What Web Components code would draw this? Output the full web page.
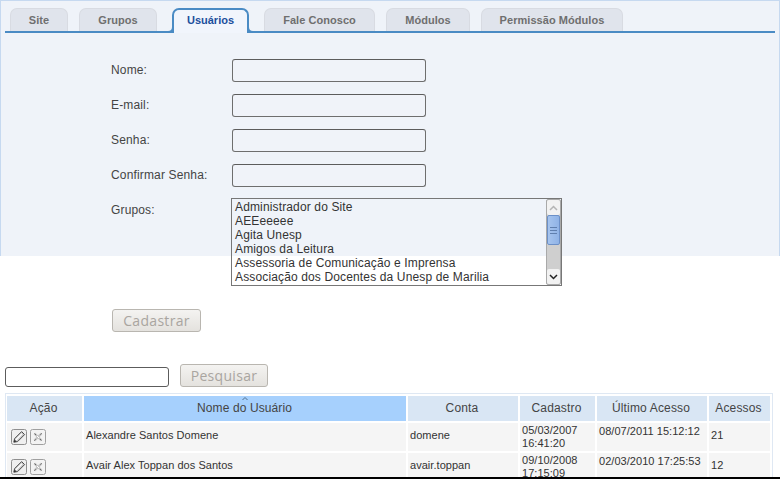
<!DOCTYPE html>
<html lang="pt"><head><meta charset="utf-8"><title>Usuários</title>
<style>
html,body{margin:0;padding:0;background:#fff;font-family:"Liberation Sans",Arial,sans-serif;}
body{width:780px;height:479px;overflow:hidden;}
</style></head><body>
<admin-page>
  <admin-panel>
    <tab-bar>
      <tab-item>Site</tab-item>
      <tab-item style="--gap:11px;--w:78px">Grupos</tab-item>
      <tab-item active style="--gap:15px;--w:77px">Usuários</tab-item>
      <tab-item style="--gap:15px;--w:111px">Fale Conosco</tab-item>
      <tab-item style="--gap:11px;--w:84px">Módulos</tab-item>
      <tab-item style="--gap:11px;--w:142px">Permissão Módulos</tab-item>
    </tab-bar>
    <form-field label="Nome:"><text-box></text-box></form-field>
    <form-field label="E-mail:"><text-box></text-box></form-field>
    <form-field label="Senha:"><text-box></text-box></form-field>
    <form-field label="Confirmar Senha:"><text-box></text-box></form-field>
    <form-field label="Grupos:" style="--top:-1px;--lbl:5px;--bx:-1px">
      <list-box>
        <div>Administrador do Site</div><div>AEEeeeee</div><div>Agita Unesp</div><div>Amigos da Leitura</div><div>Assessoria de Comunicação e Imprensa</div><div>Associação dos Docentes da Unesp de Marilia</div>
      </list-box>
    </form-field>
    <div style="padding:11px 0 0 108px"><push-button style="--w:89px">Cadastrar</push-button></div>
  </admin-panel>
  <search-row>
    <text-box style="--w:164px;--h:20px;--bg:#fff;--bd:#5c5c5c"></text-box>
    <push-button style="--w:88px">Pesquisar</push-button>
  </search-row>
  <user-table></user-table>
</admin-page>
<template id="row-actions">
  <svg width="16" height="16" viewBox="0 0 16 16"><rect x=".5" y=".5" width="15" height="15" rx="2" fill="#efefef" stroke="#8f8f8f"/><path d="M2.800 13.200l.8-3.600 7-7 3 3-7 7z" fill="#c9c9c9" stroke="#4c4c4c"/><path d="M4.800 11l6.200-6.200" stroke="#fff" stroke-width="1.500"/><path d="M2.800 13.200l.7-2.700 2 2z" fill="#333"/></svg>
  <svg width="16" height="16" viewBox="0 0 16 16"><rect x=".5" y=".5" width="15" height="15" rx="2" fill="#f3f3f3" stroke="#a0a0a0"/><path d="M4.500 4.500l7 7M11.500 4.500l-7 7" stroke="#c2c2c2" stroke-width="2.400"/><path d="M4 12l2-2M10 6l2-2" stroke="#8a8a8a" stroke-width="1"/><path d="M4.500 4.500l1.500 1.500M10 10l1.500 1.500" stroke="#6a6a6a" stroke-width="1"/><path d="M7 7l2 2" stroke="#fff"/></svg>
</template>
<script>
const shadow=(el,html)=>{el.attachShadow({mode:'open'}).innerHTML=html;};
customElements.define('admin-page',class extends HTMLElement{connectedCallback(){if(this.shadowRoot)return;shadow(this,`<style>
:host{display:block;position:relative;width:780px;height:479px;overflow:hidden}
.bar{position:absolute;left:0;right:0;bottom:0;height:2px;background:#000}
</style><slot></slot><div class="bar"></div>`);}});
customElements.define('admin-panel',class extends HTMLElement{connectedCallback(){if(this.shadowRoot)return;shadow(this,`<style>
:host{display:block;box-sizing:border-box;height:256px;background:#eff3f9;border:1px solid #c6d9f0;border-bottom:0;padding:7px 3px 0 3px}
</style><slot></slot>`);}});
customElements.define('tab-bar',class extends HTMLElement{connectedCallback(){if(this.shadowRoot)return;shadow(this,`<style>
:host{display:flex;align-items:flex-end;height:25px;box-sizing:border-box;border-bottom:2px solid #4a8bc4;margin:0 1px 26px 1px;padding-left:5px}
</style><slot></slot>`);}});
customElements.define('tab-item',class extends HTMLElement{connectedCallback(){if(this.shadowRoot)return;const a=this.hasAttribute('active');shadow(this,`<style>
:host{display:flex;box-sizing:border-box;position:relative;margin-left:var(--gap,0);width:var(--w,58px);height:23px;margin-bottom:0;align-items:center;justify-content:center;
 font:bold 11px "Liberation Sans",sans-serif;letter-spacing:.05px;color:#6f6f6f;background:#e0e4ec;border:1px solid #d8dbe2;border-bottom:0;border-radius:7px 7px 0 0;padding-bottom:1px}
:host([active]){height:25px;margin-bottom:-2px;color:#1c4f9c;background:#f1f5fc;border:2px solid #4a8bc4;border-bottom:0;letter-spacing:0;padding-bottom:3px}
.c{position:absolute;bottom:0;border-bottom:2px solid #4a8bc4;background:transparent;box-sizing:border-box;width:7px;height:7px}
.l{left:-7px;border-right:2px solid #4a8bc4;border-radius:0 0 6px 0}
.r{right:-7px;border-left:2px solid #4a8bc4;border-radius:0 0 0 6px}
</style><slot></slot>${a?'<i class="c l"></i><i class="c r"></i>':''}`);}});
customElements.define('form-field',class extends HTMLElement{connectedCallback(){if(this.shadowRoot)return;shadow(this,`<style>
:host{display:flex;align-items:flex-start;margin:var(--top,0) 0 12px 0;padding-left:107px;font:12px "Liberation Sans",sans-serif;color:#444}
.l{width:121px;flex:none;padding-top:var(--lbl,4px);margin-right:var(--bx,0);letter-spacing:.15px}
</style><div class="l">${this.getAttribute('label')}</div><slot></slot>`);}});
customElements.define('text-box',class extends HTMLElement{connectedCallback(){if(this.shadowRoot)return;shadow(this,`<style>
:host{display:block}
input{display:block;box-sizing:border-box;width:var(--w,194px);height:var(--h,23px);margin:0;padding:1px 3px;background:var(--bg,#f0f3f9);border:1px solid var(--bd,#6e6e6e);border-top-color:#5c5c5c;border-radius:3px;outline:0}
</style><input type="text">`);}});
customElements.define('list-box',class extends HTMLElement{connectedCallback(){if(this.shadowRoot)return;shadow(this,`<style>
:host{display:flex;box-sizing:border-box;width:331px;height:88px;border:1px solid #777;font:12px/14px "Liberation Sans",sans-serif;color:#333;letter-spacing:.14px}
.o{flex:1;padding:1px 0 0 3px;overflow:hidden}
.s{width:15px;flex:none;display:flex;flex-direction:column;box-sizing:border-box;border:1px solid #a9a9a9;border-radius:2px;background:#cfcfcf}
.u,.d{height:15px;flex:none;display:flex;align-items:center;justify-content:center;background:#f2f2f2;border-radius:2px}
.t{height:30px;flex:none;box-sizing:border-box;background:linear-gradient(90deg,#a6c4ee,#90b3e6);border:1px solid #6c90c8;border-radius:2px;display:flex;align-items:center;justify-content:center}
.f{flex:1}
</style><div class="o"><slot></slot></div><div class="s">
<div class="u"><svg width="9" height="6" viewBox="0 0 9 6"><path d="M1 5l3.500-3.500L8 5" fill="none" stroke="#b5b5b5" stroke-width="1.500"/></svg></div>
<div class="t"><svg width="7" height="7" viewBox="0 0 7 7"><path d="M0 .5h7M0 3.500h7M0 6.500h7" stroke="#5f7fae"/></svg></div><div class="f"></div>
<div class="d"><svg width="9" height="6" viewBox="0 0 9 6"><path d="M1 1l3.500 3.500L8 1" fill="none" stroke="#222" stroke-width="1.500"/></svg></div></div>`);}});
customElements.define('push-button',class extends HTMLElement{connectedCallback(){if(this.shadowRoot)return;shadow(this,`<style>
:host{display:inline-flex;box-sizing:border-box;width:var(--w);height:23px;align-items:center;justify-content:center;border:1px solid #b9b6b0;border-radius:3px;background:linear-gradient(#f4f3f1,#e4e2de);color:#a9a5a0;font:14px "Open Sans","DejaVu Sans",sans-serif;letter-spacing:.3px}
</style><slot></slot>`);}});
customElements.define('search-row',class extends HTMLElement{connectedCallback(){if(this.shadowRoot)return;shadow(this,`<style>
:host{display:flex;align-items:flex-end;gap:11px;margin:108px 0 6px 5px}
</style><slot></slot>`);}});
customElements.define('user-table',class extends HTMLElement{connectedCallback(){if(this.shadowRoot)return;
const rows=[['Alexandre Santos Domene','domene','05/03/2007<br>16:41:20','08/07/2011 15:12:12','21'],['Avair Alex Toppan dos Santos','avair.toppan','09/10/2008<br>17:15:09','02/03/2010 17:25:53','12']];
const icons=document.getElementById('row-actions').innerHTML.trim();
shadow(this,`<style>
:host{display:block;box-sizing:border-box;margin-left:5px;width:768px;border:1px solid #dfe8f3;border-bottom:0;padding:2px 1px 0}
table{border-collapse:separate;border-spacing:2px;table-layout:fixed;width:767px;margin:-2px -2px 0;font:11px "Liberation Sans",sans-serif;color:#333}
th{height:25px;padding:0 2px 2px 0;box-sizing:border-box;background:#d9e6f4;font:12px "Liberation Sans",sans-serif;color:#444;letter-spacing:.17px}
th.on{background:#a6d0fd;position:relative;letter-spacing:.1px;padding-right:1px}
.arr{position:absolute;left:158px;top:1px;width:6px;height:3px}
td{height:28px;padding:0 2px 5px;background:#f5f5f5;letter-spacing:.04px;box-sizing:border-box;overflow:hidden;vertical-align:middle}
td.i{padding:6px 0 0 4px;white-space:nowrap;vertical-align:top;font-size:11px}td.i svg{vertical-align:top}
td.top{vertical-align:top;padding-top:2px;padding-bottom:0;line-height:13px}
td.dt{vertical-align:top;line-height:13px;padding-top:1px;padding-bottom:0}
</style><table><colgroup><col style="width:75px"><col style="width:322px"><col style="width:110px"><col style="width:75px"><col style="width:110px"><col style="width:61px"></colgroup>
<thead><tr><th>Ação</th><th class="on">Nome do Usuário<svg class="arr" viewBox="0 0 6 3"><path d="M.5 3L3 .5 5.500 3" fill="none" stroke="#4f6f8c"/></svg></th><th>Conta</th><th>Cadastro</th><th>Último Acesso</th><th>Acessos</th></tr></thead>
<tbody>${rows.map(r=>`<tr><td class="i">${icons}</td><td>${r[0]}</td><td>${r[1]}</td><td class="dt">${r[2]}</td><td class="top">${r[3]}</td><td>${r[4]}</td></tr>`).join('')}</tbody></table>`);}});
</script>
</body></html>
